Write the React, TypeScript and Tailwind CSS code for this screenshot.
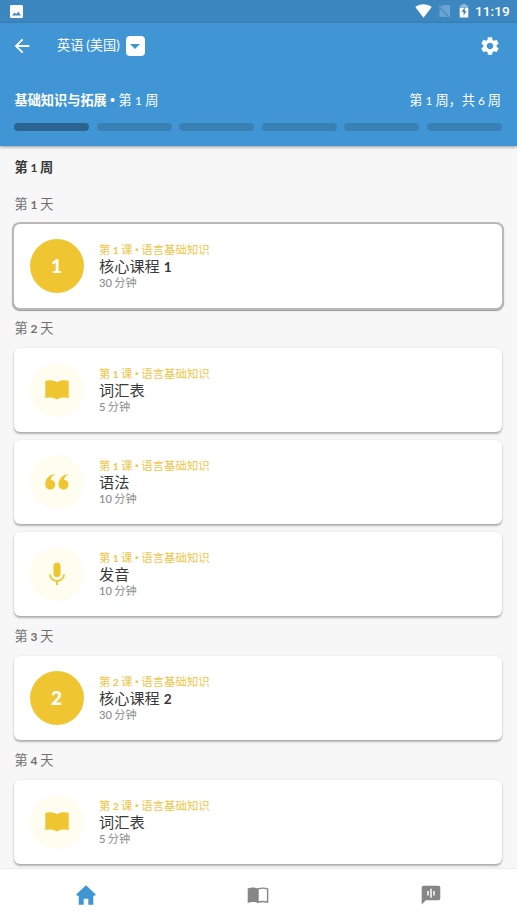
import type { ReactNode } from 'react';
import { MdArrowBack, MdSettings } from 'react-icons/md';

type Kind = 'core' | 'vocabulary' | 'grammar' | 'pronunciation';

interface Lesson {
  kind: Kind;
  lesson: number;
  title: string;
  minutes: number;
  active?: boolean;
}

interface Day {
  day: number;
  lessons: Lesson[];
}

const TOTAL_WEEKS = 6;

const days: Day[] = [
  { day: 1, lessons: [{ kind: 'core', lesson: 1, title: '核心课程', minutes: 30, active: true }] },
  {
    day: 2,
    lessons: [
      { kind: 'vocabulary', lesson: 1, title: '词汇表', minutes: 5 },
      { kind: 'grammar', lesson: 1, title: '语法', minutes: 10 },
      { kind: 'pronunciation', lesson: 1, title: '发音', minutes: 10 },
    ],
  },
  { day: 3, lessons: [{ kind: 'core', lesson: 2, title: '核心课程', minutes: 30 }] },
  { day: 4, lessons: [{ kind: 'vocabulary', lesson: 2, title: '词汇表', minutes: 5 }] },
];

function BookIcon() {
  return (
    <svg width="24" height="20" viewBox="0 0 24 20" fill="currentColor">
      <path d="M.3.9C4.3-.2 8.500.1 12 2.300 15.500.1 19.700-.2 23.700.9V18.100C19.500 17 15.500 17.200 12 19.600 8.500 17.200 4.500 17 .3 18.100Z" />
    </svg>
  );
}

function QuoteIcon() {
  return (
    <svg width="24" height="16" viewBox="0 0 24 16" fill="currentColor">
      <path d="M10.500.3C7.600 1.300 6 3.400 5.800 6 8.400 6 10.200 8 10.200 10.500 10.200 13.300 8.100 15.600 5.200 15.600 2.100 15.600.3 13.300.3 10.100.3 4.800 4.300.4 10.500.3Z" />
      <path d="M23.800.3C20.900 1.300 19.300 3.400 19.100 6 21.700 6 23.500 8 23.500 10.500 23.500 13.300 21.400 15.600 18.500 15.600 15.400 15.600 13.600 13.300 13.600 10.100 13.600 4.800 17.600.4 23.800.3Z" />
    </svg>
  );
}

function MicIcon() {
  return (
    <svg width="16" height="24" viewBox="0 0 16 24" fill="none">
      <rect x="4.500" y=".7" width="7" height="14.300" rx="3" fill="currentColor" />
      <path d="M1 12.500a7 6.500 0 0 0 14 0M8 18.500v4.600" stroke="currentColor" strokeWidth="1.900" />
    </svg>
  );
}

const lessonIcons: Record<Exclude<Kind, 'core'>, ReactNode> = {
  vocabulary: <BookIcon />,
  grammar: <QuoteIcon />,
  pronunciation: <MicIcon />,
};

function Bullet() {
  return <span className="font-['Noto_Sans']">•</span>;
}

// Numerals sit a little smaller than the Chinese glyphs around them
function Num({ children }: { children: ReactNode }) {
  return <span className="text-[0.9em] font-bold">{children}</span>;
}

function StatusBar() {
  return (
    <div className="flex h-[23px] shrink-0 items-center bg-[#3c87bf] pl-[10px] pr-2 text-white">
      <svg width="13" height="13" viewBox="0 0 13 13" fill="currentColor">
        <path
          fillRule="evenodd"
          d="M1.300 0h10.400A1.300 1.300 0 0 1 13 1.300v10.400A1.300 1.300 0 0 1 11.700 13H1.300A1.300 1.300 0 0 1 0 11.700V1.300A1.300 1.300 0 0 1 1.300 0ZM2 10.500h9L8.300 6.700 6.100 9.300 4.600 7.600Z"
        />
      </svg>
      <div className="ml-auto flex items-center">
        <svg width="17" height="14" viewBox="0 0 17 14" fill="currentColor">
          <path d="M8.500 13.700.3 3C5-.7 12-.7 16.700 3Z" />
        </svg>
        <svg className="ml-[6px]" width="13" height="14" viewBox="0 0 13 14">
          <path d="M5 1h7v11.500L3.300 3Z M1.500 4.500 9.800 13H1.500Z" fill="#6ba4d0" />
          <path d="M1 1.500 12 13" stroke="#6ba4d0" strokeWidth="1.300" />
        </svg>
        <svg className="ml-[8px]" width="10" height="14" viewBox="0 0 10 14">
          <path d="M3 0h4v1.500h2.300V5H.7V1.500H3Z" fill="#8bb8da" />
          <path d="M.7 4h8.600v9.500H.7Z" fill="#fff" />
          <path d="M5.800 3 2.700 8h1.900v3.700L7.500 6.900H5.800Z" fill="#3c87bf" />
        </svg>
        <span className="ml-[6px] mt-px w-[34px] whitespace-nowrap font-['Roboto'] text-[13.700px] font-medium leading-none">
          11:19
        </span>
      </div>
    </div>
  );
}

function Header() {
  return (
    <header className="z-10 flex h-[123px] shrink-0 flex-col bg-[#4095d4] text-[13.200px] text-white shadow-[0_1px_3px_rgba(0,0,0,0.4)]">
      <div className="flex h-[46px] items-center pl-[11px] pr-4">
        <MdArrowBack size={22} />
        <span className="ml-6 whitespace-nowrap [word-spacing:-0.5px]">英语 (美国)</span>
        <button className="ml-[6px] flex h-[19.500px] w-[19.500px] items-center justify-center rounded-[4px] bg-white" aria-label="切换语言">
          <svg width="10" height="5" viewBox="0 0 10 5" fill="#4095d4">
            <path d="M0 0h10L5 5Z" />
          </svg>
        </button>
        <MdSettings className="ml-auto" size={22} />
      </div>
      <div className="mt-[22px] flex h-5 items-center justify-between pl-[14.500px] pr-4">
        <p>
          <span className="font-bold">
            基础知识与拓展 <Bullet />
          </span>{' '}
          第 <span className="text-[0.9em]">1</span> 周
        </p>
        <p className="[word-spacing:-0.4px]">
          第 <span className="text-[0.9em]">1</span> 周，共 <span className="text-[0.9em]">{TOTAL_WEEKS}</span> 周
        </p>
      </div>
      <div className="mt-3 flex gap-[7.500px] pl-[14px] pr-[15px]">
        {Array.from({ length: TOTAL_WEEKS }, (_, i) => (
          <div key={i} className={`h-2 flex-1 rounded-full ${i === 0 ? 'bg-[#2b658f]' : 'bg-[#3980b5]'}`} />
        ))}
      </div>
    </header>
  );
}

function LessonCard({ kind, lesson, title, minutes, active }: Lesson) {
  const core = kind === 'core';
  return (
    <article
      className={`flex h-[84px] items-center rounded-[6px] bg-white pl-[15.500px] ${
        active
          ? 'shadow-[0_0_0_2px_#b9b9b9,0_1px_1px_2px_#999]'
          : 'shadow-[0_2px_2px_rgba(0,0,0,0.28),0_0_2px_rgba(0,0,0,0.1)]'
      }`}
    >
      <div
        className={`flex h-[54px] w-[54px] items-center justify-center rounded-full ${
          core ? 'bg-[#efc632] text-[19px] font-black text-white' : 'bg-[#fffdf0] text-[#efc632]'
        }`}
      >
        {kind === 'core' ? lesson : lessonIcons[kind]}
      </div>
      <div className="ml-[15.500px] whitespace-nowrap">
        <p className="text-[11.400px] leading-4 text-[#efc64a] [word-spacing:-0.6px]">
          第 <Num>{lesson}</Num> 课 <Bullet /> 语言基础知识
        </p>
        <h3 className="h-4 text-[15.200px] leading-4 text-[#3a3a3a]">
          {title} {core && <Num>{lesson}</Num>}
        </h3>
        <p className="text-[11.200px] leading-[17px] text-[#8c8c8c] [word-spacing:-0.5px]">
          <span className="font-medium">{minutes}</span> 分钟
        </p>
      </div>
    </article>
  );
}

function BottomNav() {
  return (
    <nav className="z-10 grid h-[53px] shrink-0 grid-cols-3 items-center justify-items-center bg-white pb-px pr-px text-[#85858a] shadow-[0_-1px_1px_rgba(0,0,0,0.04)]">
      <svg className="mr-px" width="20" height="20" viewBox="0 0 20 20" fill="#4095d4">
        <path d="M10 .2 19.800 9.500 18.800 10.700H17.300V19.800H12.300V13.700H7.700V19.800H2.700V10.700H1.200L.2 9.500Z" />
      </svg>
      <svg width="22" height="17" viewBox="0 0 22 17">
        <path d="M.7 1.500C4 .3 8 .3 11 1.700V15.900C8 14.700 4 14.700.7 15.900Z" fill="currentColor" />
        <path d="M11 1.900C14 .9 17.500.9 20.600 1.900V15C17.500 14.300 14 14.300 11 15.200Z" fill="none" stroke="currentColor" strokeWidth="1.400" />
      </svg>
      <svg className="ml-px" width="20" height="20" viewBox="0 0 20 20">
        <path d="M2.500.7h15a1.800 1.800 0 0 1 1.800 1.800v11a1.800 1.800 0 0 1-1.800 1.800H4.800L.7 19.500v-17A1.800 1.800 0 0 1 2.500.7Z" fill="currentColor" />
        <path d="M7 6v4.500M10 3.700v9M13 6v4.500" stroke="#fff" strokeWidth="1.500" />
      </svg>
    </nav>
  );
}

export default function App() {
  return (
    <div className="flex h-[922px] w-[517px] flex-col overflow-hidden bg-[#f7f7f7] font-['Lato','Noto_Sans_CJK_SC',sans-serif]">
      <StatusBar />
      <Header />
      <main className="flex-1 overflow-hidden pl-[14px] pr-[15px] pt-[4px]">
        <h1 className="h-[34px] pl-[0.5px] text-[13.200px] font-bold leading-[34px] text-[#3a3a3a] [word-spacing:-0.5px]">
          第 <Num>1</Num> 周
        </h1>
        {days.map(({ day, lessons }) => (
          <section key={day}>
            <h2 className="h-10 pl-[0.5px] text-[13.200px] leading-10 text-[#707070] [word-spacing:-0.5px]">
              第 <Num>{day}</Num> 天
            </h2>
            <div className="flex flex-col gap-2">
              {lessons.map((item, i) => (
                <LessonCard key={i} {...item} />
              ))}
            </div>
          </section>
        ))}
      </main>
      <BottomNav />
    </div>
  );
}
